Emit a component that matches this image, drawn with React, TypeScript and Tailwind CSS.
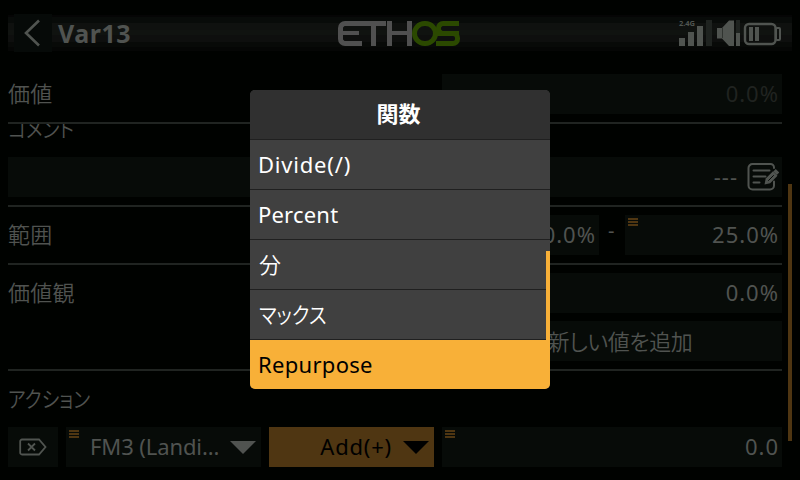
import type { ReactNode } from "react";

const latin = "font-['Noto_Sans','Noto_Sans_CJK_JP',sans-serif]";
const jp = "font-['Noto_Sans_CJK_JP',sans-serif] font-[350] [font-feature-settings:'palt']";

function Logo() {
  return (
    <div className="flex h-[25px] w-[123px]" role="img" aria-label="ETHOS">
      <div className="flex h-[25px] w-[24px] items-center rounded-l-[7px] border-y-[5px] border-l-[5px] border-[#505050]">
        <div className="h-[4px] w-[16px] bg-[#505050]" />
      </div>
      <div className="flex h-[25px] w-[24px] flex-col items-center">
        <div className="h-[5px] w-full bg-[#505050]" />
        <div className="mr-[2px] h-[20px] w-[5px] bg-[#505050]" />
      </div>
      <div className="ml-[1px] flex h-[25px] w-[25px] items-center border-x-[5px] border-[#505050]">
        <div className="h-[4px] w-full bg-[#505050]" />
      </div>
      <div className="h-[25px] w-[26px] rounded-full border-[5px] border-[#2b4900]" />
      <div className="-ml-[2px] h-[25px] w-[25px]">
        <div className="h-[15px] w-[23px] rounded-l-[7px] border-y-[5px] border-l-[5px] border-[#2b4900]" />
        <div className="-mt-[5px] h-[15px] w-[24px] rounded-r-[7px] border-y-[5px] border-r-[5px] border-[#2b4900]" />
      </div>
    </div>
  );
}

function StatusIcons() {
  return (
    <svg width="104" height="28" viewBox="678 19 104 28" fill="#505450">
      <text x="679" y="26" fontSize="7.5" fontWeight="700" fontFamily="Noto Sans, sans-serif" textLength="16">2.4G</text>
      <rect x="679" y="38" width="6" height="8" />
      <rect x="688" y="32" width="6" height="14" />
      <rect x="697" y="26" width="6" height="20" />
      <rect x="706" y="20" width="6" height="26" fill="#1f2320" />
      <path d="M717 28h5l7-7.5h5V46h-5l-7-7.5h-5z" />
      <path d="M722.5 28v10" stroke="#303430" />
      <rect x="736" y="20" width="4" height="13" fill="#1f2320" />
      <rect x="736" y="33" width="4" height="13" />
      <rect x="745" y="24" width="30.5" height="20" rx="4" fill="none" stroke="#505450" strokeWidth="2.4" />
      <rect x="776" y="28" width="4" height="12" rx="1" fill="none" stroke="#505450" strokeWidth="2" />
      <rect x="749" y="27" width="4" height="14" />
      <rect x="755" y="27" width="4" height="14" />
    </svg>
  );
}

function Mark() {
  return (
    <div className="flex flex-col gap-px self-start pt-[3px] pl-[3px]">
      <div className="h-[2px] w-[10px] bg-[#4f3612]" />
      <div className="h-[2px] w-[10px] bg-[#4f3612]" />
      <div className="h-[2px] w-[10px] bg-[#4f3612]" />
    </div>
  );
}

function Field({ className, mark, children }: { className: string; mark?: boolean; children?: ReactNode }) {
  return (
    <div className={`flex h-10 shrink-0 items-center bg-[#070b08] ${className}`}>
      {mark && <Mark />}
      {children}
    </div>
  );
}

function Value({ children, className = "pr-[3px]" }: { children: ReactNode; className?: string }) {
  return <span className={`ml-auto text-[22px] leading-[38px] tracking-[1px] whitespace-pre h-10 ${className}`}>{children}</span>;
}

function Label({ children, kana }: { children: ReactNode; kana?: boolean }) {
  return (
    <div className={`w-[434px] text-[22px] leading-[36px] ${jp}`}>
      <span className={kana ? "inline-block origin-left scale-x-[0.86]" : "tracking-[0.3px]"}>{children}</span>
    </div>
  );
}

function Rule() {
  return <div className="my-2 h-[2px] shrink-0 bg-[#202421]" />;
}

function Caret({ className }: { className: string }) {
  return (
    <svg width="26" height="13" viewBox="0 0 26 13" className={className} fill="currentColor">
      <path d="M0 0h26L13 13z" />
    </svg>
  );
}

const items = [
  { label: "Divide(/)", style: "pl-2 tracking-[0.8px]" },
  { label: "Percent", style: "pl-2 tracking-[0.2px]" },
  { label: "分", style: jp + " pl-[9px] leading-[46px]" },
  { label: "マックス", style: jp + " pl-[9px] leading-[46px]", narrow: true },
];

function Menu() {
  return (
    <div className="absolute top-[90px] left-[250px] flex h-[299px] w-[300px] flex-col overflow-hidden rounded-[5px] bg-[#404040] text-white">
      <div className="h-[50px] border-b border-[#202020] bg-[#303030] pr-[3px] text-center font-['Noto_Sans_CJK_JP',sans-serif] text-[22px] leading-[45px] font-bold">
        関数
      </div>
      {items.map((item) => (
        <div key={item.label} className="h-[50px] border-b border-[#202020] text-[22px] leading-[48px]">
          <div className={item.style}>
            <span className={item.narrow ? "inline-block origin-left scale-x-[0.89]" : ""}>{item.label}</span>
          </div>
        </div>
      ))}
      <div className="h-[49px] bg-[#f8b038] pl-2 text-[22px] leading-[48px] tracking-[0.3px] text-black">Repurpose</div>
      <div className="absolute top-[161px] right-0 h-[90px] w-[4px] bg-[#f8b038]" />
    </div>
  );
}

export default function App() {
  return (
    <div className={`relative h-[480px] w-[800px] overflow-hidden bg-[#000200] text-[#505350] ${latin}`}>
      <header className="flex h-[74px] pt-[14px] pl-2">
        <div className="flex h-[38px] w-[784px] items-center bg-[linear-gradient(#000200_0_1px,#050505_1px_3px,#080b09_3px_9px,#0f110f_9px_16px,#101310_16px_21px,#0e0f0e_21px_28px,#080a08_28px_33px,#050605_33px_37px,#000200_37px)]">
          <div className="ml-[6px] flex h-[38px] w-[38px] items-center justify-center bg-[#060a08]">
            <svg width="18" height="28" viewBox="0 0 18 28" fill="none" stroke="#505450" strokeWidth="2.6" className="mr-[2px]">
              <path d="M16 1.5L3 14l13 12.5" />
            </svg>
          </div>
          <div className="w-[286px] pl-[6px] text-[25px] leading-[38px] font-bold tracking-[0.5px]">Var13</div>
          <Logo />
          <div className="mt-[-1px] ml-[217px]">
            <StatusIcons />
          </div>
        </div>
      </header>
      <main className="ml-2 flex w-[774px] flex-col">
        <div className="flex h-10">
          <Label>価値</Label>
          <Field className="w-[340px]">
            <Value className="pr-[3px] text-[#202320]">0.0%</Value>
          </Field>
        </div>
        <div className="mt-2 h-[2px] bg-[#202421]" />
        <div className="h-[33px] overflow-hidden">
          <div className="-mt-[15px]">
            <Label kana>コメント</Label>
          </div>
        </div>
        <Field className="w-full">
          <Value className="pr-[9px]">---</Value>
          <svg width="32" height="28" viewBox="0 0 32 28" fill="none" stroke="#505450" strokeWidth="2" strokeLinecap="round" className="mr-[3px]">
            <path d="M27 5V4.5A3.5 3.5 0 0 0 23.500 1H5.500A4 4 0 0 0 1.500 5v17.500a4 4 0 0 0 4 4H23a4 4 0 0 0 4-4v-4" />
            <path d="M6.500 7.500h16M6.500 13.500h12M6.500 19.500h6" />
            <path d="M17.500 21.500l1.200-6L26 8.200l4.500 4.500-7.300 7.500z" fill="#505450" stroke="none" />
            <path d="M27.500 7.300l3.500 3.500" strokeWidth="3.500" strokeLinecap="butt" />
            <path d="M21.500 17.500l5-5" stroke="#070b08" strokeWidth="1" />
          </svg>
        </Field>
        <Rule />
        <div className="flex h-10">
          <Label>範囲</Label>
          <Field className="w-[157px]">
            <Value>0.0%</Value>
          </Field>
          <span className="w-[26px] pl-[9px] text-[20px] leading-[31px]">-</span>
          <Field className="w-[157px]" mark>
            <Value>25.0%</Value>
          </Field>
        </div>
        <Rule />
        <div className="flex h-10">
          <Label>価値観</Label>
          <Field className="w-[340px]">
            <Value>0.0%</Value>
          </Field>
        </div>
        <div className="mt-2 flex h-10 justify-end">
          <Field className="w-[340px] justify-center">
            <span className={`h-10 pl-[16px] text-[22px] leading-[38px] tracking-[-0.4px] ${jp}`}>新しい値を追加</span>
          </Field>
        </div>
        <Rule />
        <div className="h-12">
          <Label kana>アクション</Label>
        </div>
        <div className="flex gap-2">
          <Field className="w-[50px] justify-center">
            <svg width="28" height="18" viewBox="0 0 28 18" fill="none" stroke="#505450" strokeWidth="1.800" className="ml-[-1px]">
              <path d="M3 1.500h17L26.500 9 20 16.500H3A1.800 1.800 0 0 1 1.200 14.700V3.300A1.800 1.800 0 0 1 3 1.500z" />
              <path d="M9 5.500l7 7M16 5.500l-7 7" />
            </svg>
          </Field>
          <Field className="w-[195px]" mark>
            <span className="ml-[11px] h-10 text-[22px] leading-[38px] tracking-[-0.1px]">FM3 (Landi...</span>
            <Caret className="mr-[5px] ml-auto" />
          </Field>
          <div className="flex h-10 w-[165px] items-center bg-[#4f3612] text-black">
            <span className="ml-auto h-10 text-[22px] leading-[38px] tracking-[0.8px]">Add(+)</span>
            <Caret className="mr-[5px] ml-[11px]" />
          </div>
          <Field className="w-[340px]" mark>
            <Value>0.0</Value>
          </Field>
        </div>
      </main>
      <div className="absolute top-[184px] left-[788px] h-[257px] w-[4px] bg-[#4f3612]" />
      <Menu />
    </div>
  );
}
